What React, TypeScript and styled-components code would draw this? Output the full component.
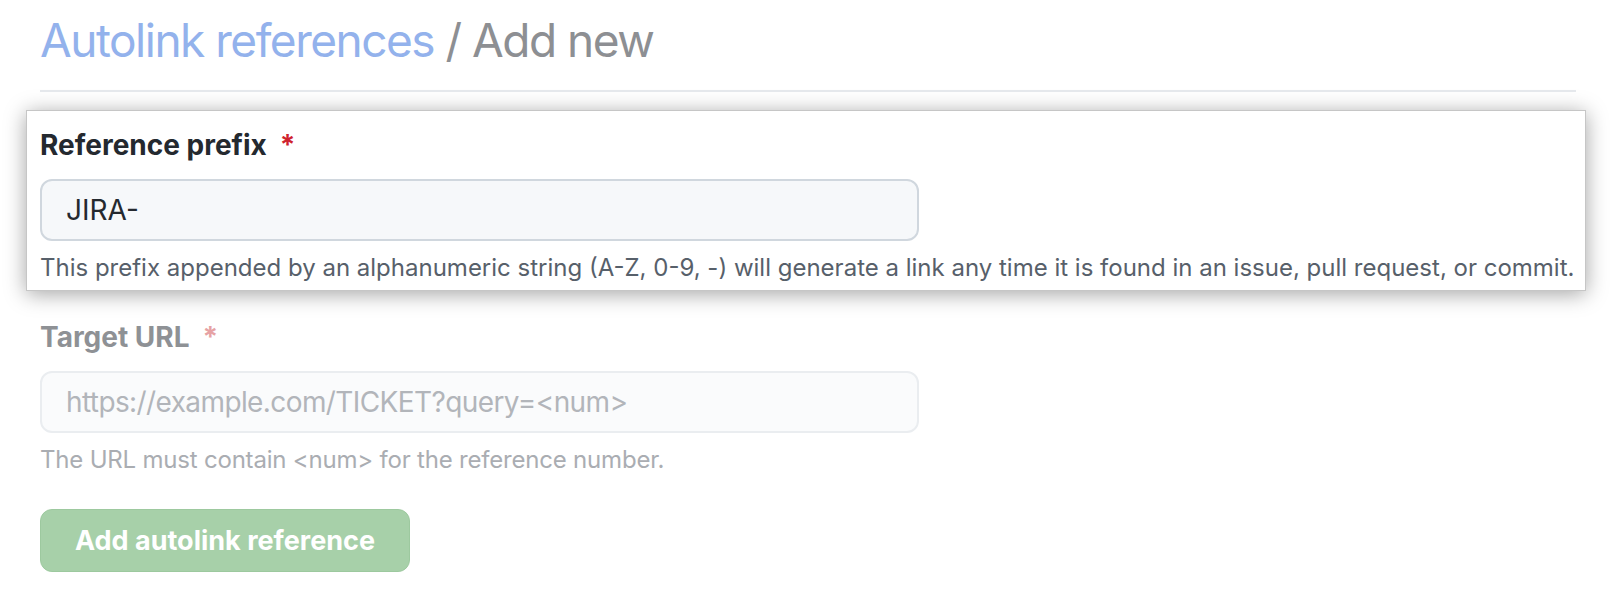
import styled, { createGlobalStyle } from "styled-components";

const GlobalStyle = createGlobalStyle`
  html, body {
    margin: 0;
    padding: 0;
    background: #ffffff;
  }
  body {
    font-family: Inter, "Liberation Sans", Arial, sans-serif;
    -webkit-font-smoothing: antialiased;
  }
`;

const Page = styled.div`
  width: 1536px;
  padding: 12px 0 0 40px;
`;

const Header = styled.div`
  padding-bottom: 22px;
  border-bottom: 2px solid #e6e9ed;
  margin-bottom: 18px;
`;

const Title = styled.h2`
  margin: 0;
  font-size: 46px;
  line-height: 56px;
  font-weight: 400;
  letter-spacing: -1.5px;
  color: #8d8f93;
`;

const Crumb = styled.span`
  color: #93b2ec;
`;

const Highlight = styled.section`
  margin: 0 -10px 28px -14px;
  padding: 16px 10px 7px 13px;
  background: #ffffff;
  border: 1px solid #c6c6c6;
  box-shadow: 0 3px 20px rgba(0, 0, 0, 0.36);
`;

const Field = styled.div`
  display: flex;
  flex-direction: column;
`;

const Label = styled.label<{ $faded?: boolean }>`
  font-size: 28px;
  line-height: 36px;
  font-weight: 700;
  color: ${(p) => (p.$faded ? "#8e9195" : "#24292f")};
  margin-bottom: 16px;
`;

const Required = styled.span<{ $faded?: boolean }>`
  margin-left: 13px;
  color: ${(p) => (p.$faded ? "#e6a2a4" : "#cf222e")};
`;

const Input = styled.input<{ $faded?: boolean }>`
  box-sizing: border-box;
  width: 879px;
  height: 62px;
  padding: 0 24px;
  font-family: inherit;
  font-size: 28px;
  color: #24292f;
  background: ${(p) => (p.$faded ? "#fafbfc" : "#f6f8fa")};
  border: 2px solid ${(p) => (p.$faded ? "#eaedf0" : "#d0d7de")};
  border-radius: 12px;
  outline: none;

  &::placeholder {
    color: #b2b5ba;
    letter-spacing: -0.6px;
  }
`;

const Note = styled.p<{ $faded?: boolean }>`
  margin: 12px 0 0;
  font-size: 24px;
  line-height: 30px;
  letter-spacing: ${(p) => (p.$faded ? "-0.2px" : "0")};
  color: ${(p) => (p.$faded ? "#aaadb2" : "#57606a")};
  white-space: nowrap;
`;

const Submit = styled.button`
  align-self: flex-start;
  margin-top: 34px;
  height: 63px;
  padding: 0 34px;
  font-family: inherit;
  font-size: 27px;
  font-weight: 700;
  color: #ffffff;
  background: #a7d0a9;
  border: 1px solid #9dc99f;
  border-radius: 12px;
`;

export default function App() {
  return (
    <>
      <GlobalStyle />
      <Page>
        <Header>
          <Title>
            <Crumb>Autolink references</Crumb> / Add new
          </Title>
        </Header>
        <Highlight>
          <Field>
            <Label>
              Reference prefix<Required>*</Required>
            </Label>
            <Input defaultValue="JIRA-" />
            <Note>
              This prefix appended by an alphanumeric string (A-Z, 0-9, -) will generate a link any time it is found in an issue, pull request, or commit.
            </Note>
          </Field>
        </Highlight>
        <Field>
          <Label $faded>
            Target URL<Required $faded>*</Required>
          </Label>
          <Input $faded placeholder="https://example.com/TICKET?query=<num>" />
          <Note $faded>The URL must contain &lt;num&gt; for the reference number.</Note>
        </Field>
        <Submit>Add autolink reference</Submit>
      </Page>
    </>
  );
}
